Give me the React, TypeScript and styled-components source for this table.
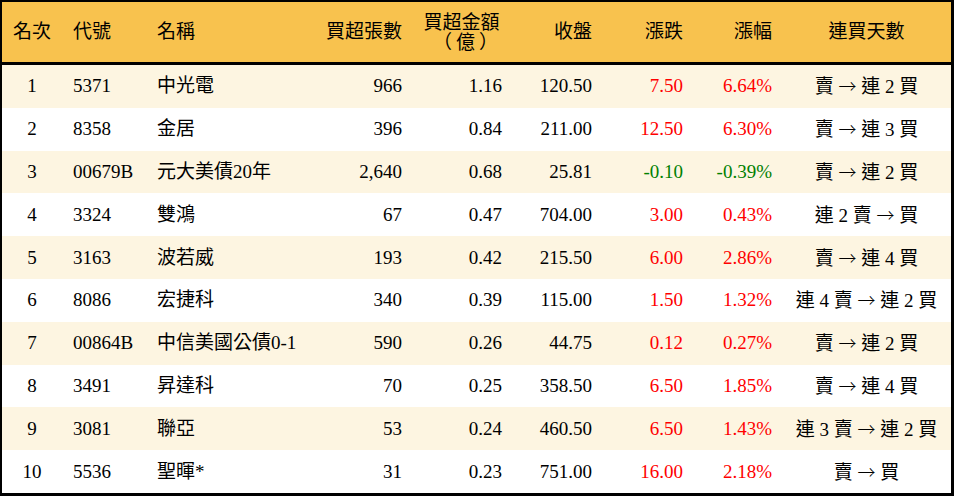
import React, { FC } from 'react'
import styled, { createGlobalStyle } from 'styled-components'

const GlobalStyle = createGlobalStyle`
  html, body {
    margin: 0;
    padding: 0;
    background: #ffffff;
  }
`

const COLUMNS = '60px 84px 174px 92px 100px 90px 91px 89px 169px'

const Table = styled.div`
  width: 954px;
  height: 496px;
  box-sizing: border-box;
  border-style: solid;
  border-color: #000000;
  border-width: 2px 3px 3px 2px;
  font-family: 'Liberation Serif', 'Noto Sans CJK TC', serif;
  font-size: 19px;
  color: #000000;
  overflow: hidden;
`

const HeaderRow = styled.div`
  display: grid;
  grid-template-columns: ${COLUMNS};
  height: 60px;
  align-items: center;
  background-color: #f8c24e;
  border-bottom: 3px solid #000000;
`

const Row = styled.div<{ $shaded: boolean }>`
  display: grid;
  grid-template-columns: ${COLUMNS};
  height: 42.8px;
  align-items: center;
  background-color: ${({ $shaded }) => ($shaded ? '#fdf5e1' : '#ffffff')};
`

const Cell = styled.div<{ $align: 'left' | 'right' | 'center' }>`
  text-align: ${({ $align }) => $align};
  padding-left: ${({ $align }) => ($align === 'left' ? '11px' : '0')};
  padding-right: ${({ $align }) => ($align === 'right' ? '10px' : '0')};
  white-space: nowrap;
  line-height: 22px;
`

const Change = styled(Cell)<{ $down: boolean }>`
  color: ${({ $down }) => ($down ? '#008000' : '#ff0000')};
`

const TwoLine = styled.span`
  display: inline-block;
  text-align: center;
  line-height: 20px;
  margin-top: 2px;
`

const Unit = styled.span`
  display: inline-block;
  padding-left: 12px;
  letter-spacing: 4px;
`

const Arrow = styled.span`
  font-family: 'Noto Sans CJK TC', sans-serif;
  font-size: 18px;
  font-weight: 300;
`

interface Item {
  code: string
  name: string
  lots: string
  amount: string
  close: string
  change: string
  pct: string
  sell: string
  buy: string
}

const items: Item[] = [
  { code: '5371', name: '中光電', lots: '966', amount: '1.16', close: '120.50', change: '7.50', pct: '6.64%', sell: '賣', buy: '連 2 買' },
  { code: '8358', name: '金居', lots: '396', amount: '0.84', close: '211.00', change: '12.50', pct: '6.30%', sell: '賣', buy: '連 3 買' },
  { code: '00679B', name: '元大美債20年', lots: '2,640', amount: '0.68', close: '25.81', change: '-0.10', pct: '-0.39%', sell: '賣', buy: '連 2 買' },
  { code: '3324', name: '雙鴻', lots: '67', amount: '0.47', close: '704.00', change: '3.00', pct: '0.43%', sell: '連 2 賣', buy: '買' },
  { code: '3163', name: '波若威', lots: '193', amount: '0.42', close: '215.50', change: '6.00', pct: '2.86%', sell: '賣', buy: '連 4 買' },
  { code: '8086', name: '宏捷科', lots: '340', amount: '0.39', close: '115.00', change: '1.50', pct: '1.32%', sell: '連 4 賣', buy: '連 2 買' },
  { code: '00864B', name: '中信美國公債0-1', lots: '590', amount: '0.26', close: '44.75', change: '0.12', pct: '0.27%', sell: '賣', buy: '連 2 買' },
  { code: '3491', name: '昇達科', lots: '70', amount: '0.25', close: '358.50', change: '6.50', pct: '1.85%', sell: '賣', buy: '連 4 買' },
  { code: '3081', name: '聯亞', lots: '53', amount: '0.24', close: '460.50', change: '6.50', pct: '1.43%', sell: '連 3 賣', buy: '連 2 買' },
  { code: '5536', name: '聖暉*', lots: '31', amount: '0.23', close: '751.00', change: '16.00', pct: '2.18%', sell: '賣', buy: '買' },
]

const App: FC = () => (
  <>
    <GlobalStyle />
    <Table>
      <HeaderRow>
        <Cell $align="center">名次</Cell>
        <Cell $align="left">代號</Cell>
        <Cell $align="left">名稱</Cell>
        <Cell $align="right">買超張數</Cell>
        <Cell $align="right">
          <TwoLine>
            買超金額
            <br />
            <Unit>（億）</Unit>
          </TwoLine>
        </Cell>
        <Cell $align="right">收盤</Cell>
        <Cell $align="right">漲跌</Cell>
        <Cell $align="right">漲幅</Cell>
        <Cell $align="center">連買天數</Cell>
      </HeaderRow>

      {items.map((item, i) => {
        const down = item.change.startsWith('-')
        return (
          <Row key={item.code} $shaded={i % 2 === 0}>
            <Cell $align="center">{i + 1}</Cell>
            <Cell $align="left">{item.code}</Cell>
            <Cell $align="left">{item.name}</Cell>
            <Cell $align="right">{item.lots}</Cell>
            <Cell $align="right">{item.amount}</Cell>
            <Cell $align="right">{item.close}</Cell>
            <Change $align="right" $down={down}>
              {item.change}
            </Change>
            <Change $align="right" $down={down}>
              {item.pct}
            </Change>
            <Cell $align="center">
              {item.sell} <Arrow>→</Arrow> {item.buy}
            </Cell>
          </Row>
        )
      })}
    </Table>
  </>
)

export default App
